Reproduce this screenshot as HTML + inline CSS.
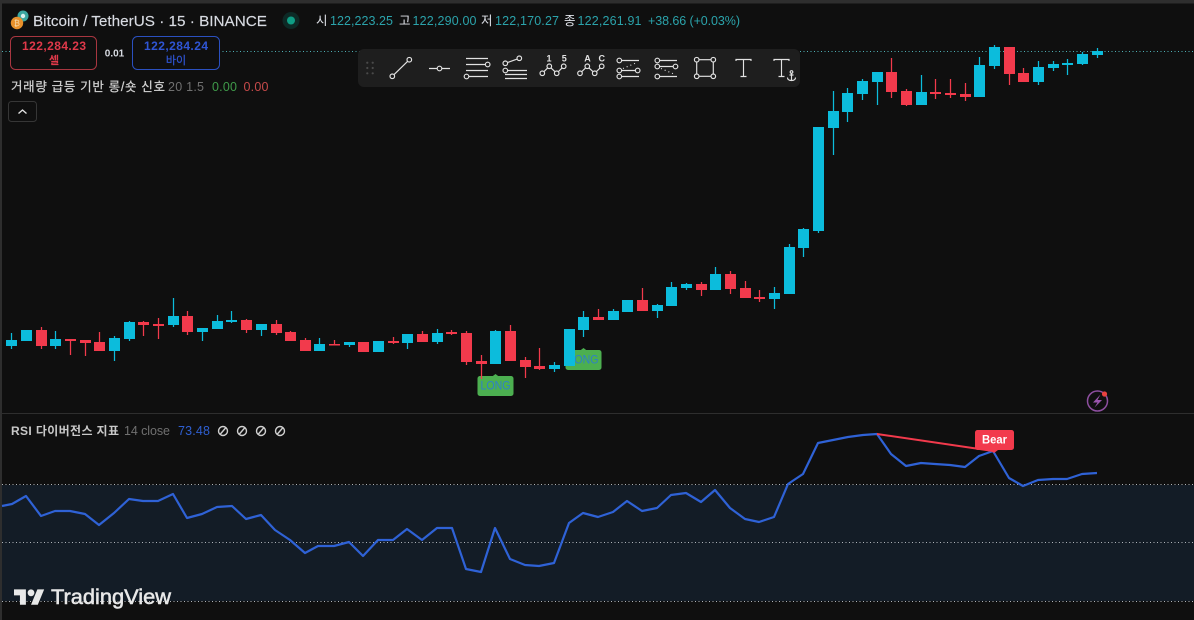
<!DOCTYPE html>
<html><head><meta charset="utf-8"><style>
html,body{margin:0;padding:0;background:#0f0f0f;width:1194px;height:620px;overflow:hidden}
svg{display:block;filter:blur(.35px)}
text{font-family:"Liberation Sans","Noto Sans CJK KR",sans-serif;white-space:pre}
.ic{fill:none;stroke:#e2e2e2;stroke-width:1.15}
.ic circle{fill:#1e1e1e}
</style></head><body>
<svg width="1194" height="620" viewBox="0 0 1194 620" xmlns="http://www.w3.org/2000/svg">
<rect width="1194" height="620" fill="#0f0f0f"/>
<rect x="2" y="485" width="1192" height="116" fill="#131c26"/>
<rect width="1194" height="3.5" fill="#2e2e2e"/>
<rect width="2" height="620" fill="#2e2e2e"/>
<path d="M2 413.5H1194" stroke="#2e2e2e"/>
<path d="M2 51.5H1194" stroke="#4fb0b5" stroke-dasharray="1 2.5"/>
<g stroke="#b0b5ba" stroke-dasharray="1 2.5"><path d="M2 484.5H1194M2 542.5H1194M2 601.5H1194"/></g>

<!-- LONG labels -->
<path d="M495.5 374l4 3h-8z" fill="#4caf50"/>
<rect x="477.5" y="376" width="36" height="20" rx="2.5" fill="#4caf50"/>
<text x="495.5" y="389.5" font-size="12" fill="#2f7fc9" text-anchor="middle" textLength="30" lengthAdjust="spacingAndGlyphs">LONG</text>
<path d="M583.5 348l4 3h-8z" fill="#4caf50"/>
<rect x="565.5" y="350" width="36" height="20" rx="2.5" fill="#4caf50"/>
<text x="583.5" y="363.5" font-size="12" fill="#2f7fc9" text-anchor="middle" textLength="30" lengthAdjust="spacingAndGlyphs">LONG</text>

<!-- wicks -->
<path fill="none" stroke="#0cbcdc" stroke-width="1.25" d="M11.5 333V349M55.5 331V349M114.5 336V361M129.5 321V341M173.5 298V327M202.5 328V341M217.5 315V329M231.5 311V323M261.5 324V336M319.5 338V351M349.5 342V347M407.5 334V349M437.5 329V344M495.5 330V364M554.5 362V372M583.5 311V337M613.5 309V320M657.5 304V318M671.5 282V306M686.5 283V290M715.5 267V290M774.5 287V309M789.5 244V294M803.5 228V257M818.5 127V233M833.5 91V155M847.5 88V122M862.5 79V100M877.5 72V105M921.5 75V105M979.5 57V97M994.5 45V69M1038.5 61V85M1053.5 61V71M1067.5 59V75M1082.5 52V65M1097.5 48V58"/>
<path fill="none" stroke="#f23a4c" stroke-width="1.25" d="M41.5 327V349M70.5 339V355M85.5 340V356M99.5 332V351M143.5 321V336M158.5 318V339M187.5 311V335M246.5 319V333M276.5 320V335M290.5 331V341M305.5 338V351M334.5 340V345M363.5 342V352M393.5 337V344M422.5 331V342M451.5 330V335M466.5 331V365M481.5 355V379M510.5 325V361M525.5 357V378M539.5 348V370M598.5 309V320M642.5 288V311M701.5 282V296M730.5 271V294M745.5 281V298M759.5 290V302M891.5 58V98M906.5 89V106M935.5 79V99M950.5 79V98M965.5 83V101M1009.5 47V85M1023.5 68V82"/>
<!-- up bodies -->
<path fill="none" stroke="#0cbcdc" stroke-width="11" d="M11.5 340V346M26.5 330V341M55.5 339V346M114.5 338V351M129.5 322V339M173.5 316V325M202.5 328V332M217.5 321V329M231.5 320V322M261.5 324V330M319.5 344V351M349.5 342V345M378.5 341V352M407.5 334V343M437.5 333V342M495.5 331V364M554.5 365V369M569.5 329V366M583.5 317V330M613.5 311V320M627.5 300V312M657.5 305V311M671.5 287V306M686.5 284V288M715.5 274V290M774.5 293V299M789.5 247V294M803.5 229V248M818.5 127V231M833.5 111V128M847.5 93V112M862.5 81V94M877.5 72V82M921.5 92V105M979.5 65V97M994.5 47V66M1038.5 67V82M1053.5 64V68M1067.5 63V65M1082.5 54V64M1097.5 51V55"/>
<!-- down bodies -->
<path fill="none" stroke="#f23a4c" stroke-width="11" d="M41.5 330V346M70.5 339V341M85.5 340V343M99.5 342V351M143.5 322V325M158.5 324V326M187.5 316V332M246.5 320V330M276.5 324V333M290.5 332V341M305.5 340V351M334.5 344V345.5M363.5 342V352M393.5 341V343M422.5 334V342M451.5 332V334M466.5 333V362M481.5 361V364M510.5 331V361M525.5 360V367M539.5 366V369M598.5 317V320M642.5 300V311M701.5 284V290M730.5 274V289M745.5 288V298M759.5 297V299M891.5 72V92M906.5 91V105M935.5 92V94M950.5 93V95M965.5 94V97M1009.5 47V74M1023.5 73V82"/>

<!-- toolbar -->
<rect x="358" y="49" width="442" height="38" rx="6" fill="#1e1e1e"/>
<g fill="#4a4a4a"><circle cx="367.3" cy="62.7" r="1.1"/><circle cx="372.7" cy="62.7" r="1.1"/><circle cx="367.3" cy="68" r="1.1"/><circle cx="372.7" cy="68" r="1.1"/><circle cx="367.3" cy="73.3" r="1.1"/><circle cx="372.7" cy="73.3" r="1.1"/></g>
<g class="ic">
<path d="M392.3 76.3L409.3 59.7"/><circle cx="392.3" cy="76.3" r="2.3"/><circle cx="409.3" cy="59.7" r="2.3"/>
<path d="M429 68.5H450"/><circle cx="439.5" cy="68.5" r="2.3"/>
<path d="M466 58.5H488M466 64.5H486M466 70.5H488M468 76.5H488"/><circle cx="487.7" cy="64.5" r="2.3"/><circle cx="466.5" cy="76.5" r="2.3"/>
<path d="M505.3 63.3L519.3 58.3M507 70.5H527M505 74.5H527M505 78.5H527"/><circle cx="519.3" cy="58.3" r="2.3"/><circle cx="505.3" cy="63.3" r="2.3"/><circle cx="505.3" cy="70.5" r="2.3"/>
<path d="M542.3 73.3L549.3 66.3L556.7 73.3L563.7 66.3"/><circle cx="542.3" cy="73.3" r="2.3"/><circle cx="549.3" cy="66.3" r="2.3"/><circle cx="556.7" cy="73.3" r="2.3"/><circle cx="563.7" cy="66.3" r="2.3"/>
<path d="M580 73.3L587.3 66.3L594.7 73.3L601.7 66.3"/><circle cx="580" cy="73.3" r="2.3"/><circle cx="587.3" cy="66.3" r="2.3"/><circle cx="594.7" cy="73.3" r="2.3"/><circle cx="601.7" cy="66.3" r="2.3"/>
<path d="M621 60.5H639M621 70.5H636M621 76.5H639"/><path d="M623 68.5L637 62.5" stroke-dasharray="1 3"/><circle cx="619.3" cy="60.5" r="2.3"/><circle cx="619.3" cy="70.5" r="2.3"/><circle cx="637.7" cy="70.5" r="2.3"/><circle cx="619.3" cy="76.5" r="2.3"/>
<path d="M659 60.5H677M659 66.5H674M659 76.5H677"/><path d="M661 68.5L675 74.5" stroke-dasharray="1 3"/><circle cx="657.3" cy="60.5" r="2.3"/><circle cx="657.3" cy="66.5" r="2.3"/><circle cx="675.5" cy="66.5" r="2.3"/><circle cx="657.3" cy="76.5" r="2.3"/>
<rect x="696.7" y="59.7" width="16.6" height="16.6"/><circle cx="696.7" cy="59.7" r="2.3"/><circle cx="713.3" cy="59.7" r="2.3"/><circle cx="696.7" cy="76.3" r="2.3"/><circle cx="713.3" cy="76.3" r="2.3"/>
<path d="M736 61V59.5H751V61M743.5 59.5V76.5M740.5 76.5H746.5"/>
<path d="M774 61V59.5H789V61M781.5 59.5V76.5M778.5 76.5H784.5"/>
<path d="M791.5 73.5V80.5M789.5 75H793.5M787.5 77.5C787.5 80 789.5 80.5 791.5 80.5C793.5 80.5 795.5 80 795.5 77.5"/><circle cx="791.5" cy="72" r="1.3"/>
</g>
<g fill="#e2e2e2" font-weight="bold" text-anchor="middle">
<text x="549" y="61.5" font-size="9">1</text><text x="564.3" y="61.5" font-size="9">5</text>
<text x="587.5" y="61.5" font-size="9">A</text><text x="601.7" y="61.5" font-size="9">C</text>
</g>

<!-- header -->
<circle cx="23" cy="16" r="5.5" fill="#3aa6a0"/>
<circle cx="23" cy="16" r="2.2" fill="#d8f0ee"/>
<circle cx="17" cy="23" r="6.2" fill="#e8912c"/>
<text x="17" y="26" font-size="8" fill="#f8d9a8" text-anchor="middle">₿</text>
<text x="33" y="26" font-size="15" fill="#d8dbe2" stroke="#d8dbe2" stroke-width=".15" textLength="234" lengthAdjust="spacingAndGlyphs">Bitcoin / TetherUS · 15 · BINANCE</text>
<circle cx="291" cy="20.5" r="8.5" fill="#0d2a26"/>
<circle cx="291" cy="20.5" r="4" fill="#0f9d84"/>
<g font-size="12.5">
<text x="316" y="25" fill="#e0e3ea">시</text><text x="330" y="25" fill="#2ba3ab" textLength="63">122,223.25</text>
<text x="399" y="25" fill="#e0e3ea">고</text><text x="412.5" y="25" fill="#2ba3ab" textLength="64">122,290.00</text>
<text x="481" y="25" fill="#e0e3ea">저</text><text x="495" y="25" fill="#2ba3ab" textLength="64">122,170.27</text>
<text x="564" y="25" fill="#e0e3ea">종</text><text x="577.5" y="25" fill="#2ba3ab" textLength="64">122,261.91</text>
<text x="648" y="25" fill="#2ba3ab" textLength="92">+38.66 (+0.03%)</text>
</g>

<!-- buy sell -->
<rect x="10.5" y="36.5" width="86" height="33" rx="5" fill="#0f0f0f" stroke="#a83640"/>
<text x="54" y="50" font-size="12" font-weight="bold" fill="#e0394a" text-anchor="middle" textLength="64">122,284.23</text>
<text x="54" y="64" font-size="11" font-weight="bold" fill="#e0394a" text-anchor="middle">셀</text>
<rect x="97" y="46" width="35" height="12" fill="#0f0f0f"/>
<text x="114.5" y="56.5" font-size="10" font-weight="bold" fill="#d8dbe2" text-anchor="middle">0.01</text>
<rect x="132.5" y="36.5" width="87" height="33" rx="5" fill="#0f0f0f" stroke="#2b50c0"/>
<text x="176" y="50" font-size="12" font-weight="bold" fill="#2f55d4" text-anchor="middle" textLength="64">122,284.24</text>
<text x="176" y="64" font-size="11" fill="#2f55d4" stroke="#2f55d4" stroke-width=".2" text-anchor="middle">바이</text>

<!-- indicator legend -->
<text x="11" y="91" font-size="12.5" fill="#d0d0d0" stroke="#d0d0d0" stroke-width=".25" textLength="154">거래량 급등 기반 롱/숏 신호</text>
<text x="168" y="91" font-size="12.5" fill="#707070" textLength="36">20 1.5</text>
<text x="212" y="91" font-size="12.5" fill="#3f9a4a" textLength="25">0.00</text>
<text x="243.5" y="91" font-size="12.5" fill="#c64a4a" textLength="25">0.00</text>
<rect x="8.5" y="101.5" width="28" height="20" rx="3" fill="#0f0f0f" stroke="#363636"/>
<path d="M18.5 113.5L22.5 110L26.5 113.5" fill="none" stroke="#e0e0e0" stroke-width="1.4"/>

<!-- lightning -->
<circle cx="1097.5" cy="401" r="10" fill="none" stroke="#8e4fa0" stroke-width="1.5"/>
<path d="M1100.5 394.5L1093 402.5H1097.5L1094.5 407.5L1102 400H1097.5Z" fill="#9a55ad"/>
<circle cx="1104.5" cy="394" r="2.6" fill="#e8413f"/>

<!-- RSI legend -->
<text x="11" y="435" font-size="12" font-weight="bold" fill="#c8c8c8" textLength="108">RSI 다이버전스 지표</text>
<text x="124" y="435" font-size="12.5" fill="#707070" textLength="46">14 close</text>
<text x="178" y="435" font-size="12.5" fill="#2f5fd0" textLength="32">73.48</text>
<g fill="none" stroke="#d0d0d0" stroke-width="1.4">
<circle cx="223" cy="431" r="4.5"/><path d="M220 434.5L226 427.5"/>
<circle cx="242" cy="431" r="4.5"/><path d="M239 434.5L245 427.5"/>
<circle cx="261" cy="431" r="4.5"/><path d="M258 434.5L264 427.5"/>
<circle cx="280" cy="431" r="4.5"/><path d="M277 434.5L283 427.5"/>
</g>

<!-- RSI line -->
<polyline fill="none" stroke="#2f62d6" stroke-width="2.2" stroke-linejoin="round" points="2,506 12,504 26,496 41,516 55,511 70,511 85,514 99,525 114,513 129,499 143,501 158,501 173,494 187,518 202,514 217,507 232,506 246,519 261,515 275,530 290,540 305,553 318,546 334,546 349,542 363,556 378,540 393,540 407,529 422,540 437,528 452,528 466,569 481,572 495,528 510,559 525,565 539,566 554,563 569,523 583,513 598,517 613,512 627,501 642,511 657,508 671,495 686,493 701,502 715,490 730,508 745,519 759,522 774,517 788,484 803,474 818,443 833,440 848,437 863,435 877,434 891,454 906,466 921,463 935,464 950,465 965,467 979,456 993,451 1009,478 1023,486 1038,480 1053,479 1067,479 1082,474 1097,473"/>
<path d="M877 434L993 451" stroke="#f23a4c" stroke-width="2" fill="none"/>
<path d="M990 450h8l-4 3z" fill="#f23a4c"/>
<rect x="975" y="430" width="39" height="20" rx="2.5" fill="#f23a4c"/>
<text x="994.5" y="443.5" font-size="11.5" font-weight="bold" fill="#fff" text-anchor="middle" textLength="25" lengthAdjust="spacingAndGlyphs">Bear</text>

<!-- TradingView logo -->
<g transform="translate(14 586) scale(.85)" fill="#e8e8e8"><path d="M14 22H7V11H0V4h14v18zM28 22h-8l7.5-18h8L28 22z"/><circle cx="20" cy="8" r="4"/></g>
<text x="51" y="604" font-size="21.5" fill="#e8e8e8" stroke="#e8e8e8" stroke-width=".55" textLength="120" lengthAdjust="spacingAndGlyphs">TradingView</text>
</svg>
</body></html>
